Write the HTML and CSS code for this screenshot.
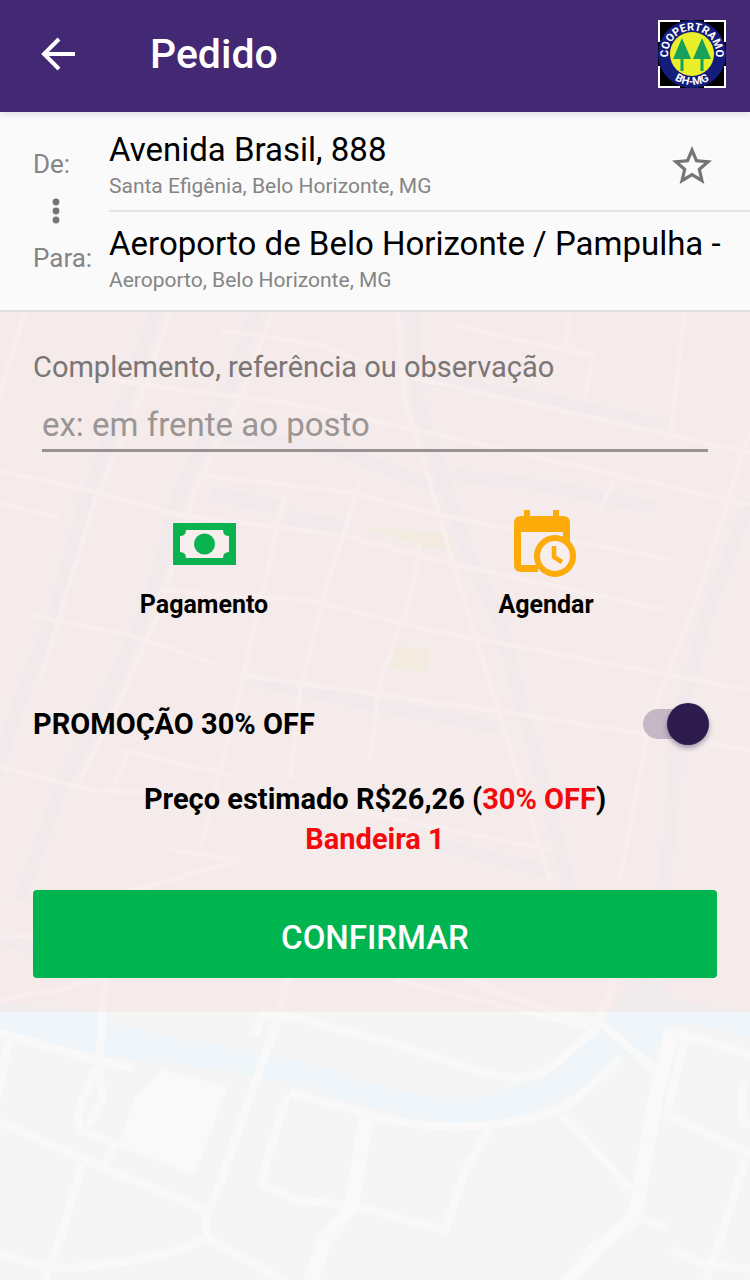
FILE: index.html
```html
<!DOCTYPE html>
<html lang="pt-BR">
<head>
  <meta charset="UTF-8" />
  <meta name="viewport" content="width=device-width, initial-scale=1" />
  <title>Pedido</title>
  <link rel="stylesheet" href="styles.css">
</head>
<body>
<div class="page">

  <!-- mapa de fundo -->
  <svg class="map" viewBox="0 0 750 1280" preserveAspectRatio="xMidYMin slice" aria-hidden="true">
    <g class="map-water">
      <path d="M-10 990 L0 1003 L95 1011 C150 1040 230 1045 300 1060 C360 1075 390 1095 450 1097 C520 1098 570 1065 600 1025 C620 1000 625 985 650 975 L665 985 C670 1010 710 1000 760 1015 L760 1040 C720 1030 690 1020 668 1028 C660 1050 650 1065 620 1055 C590 1090 540 1122 460 1124 C390 1122 350 1095 270 1080 C190 1060 100 1065 -10 1030 Z" />
    </g>
    <g class="map-avenue">
      <path d="M155 312 L125 400 L85 500 L55 610 L20 700 L-10 790" />
      <path d="M255 312 L225 400 L180 490 L150 600 L110 690 L60 790 L20 900" />
      <path d="M412 312 L418 400 L450 500 L470 560 L500 620 L520 700 L545 790 L570 890" />
      <path d="M415 378 L540 398 L660 425" />
      <path d="M215 435 L330 448 L440 488" />
      <path d="M455 475 L540 485 L655 508" />
      <path d="M750 500 L705 620 L680 720 L665 880 L640 990" />
      <path d="M250 680 L360 702 L500 728" />
      <path d="M-10 935 L35 950" />
      <path d="M440 845 L550 872" />
    </g>
    <g class="map-block">
      <path d="M212 486 L280 500 L275 514 L210 500 Z" />
      <path d="M290 510 L345 520 L340 535 L288 524 Z" />
    </g>
    <g class="map-park">
      <path d="M362 528 L415 530 L450 535 L455 552 L420 545 Z" />
      <path d="M395 646 L430 648 L428 672 L390 668 Z" />
    </g>
    <g class="map-street">
      <path d="M25 312 L-5 410" />
      <path d="M170 312 L140 400 L95 500 L40 680" />
      <path d="M272 312 L240 400 L195 490 L160 610 L120 700 L80 780" />
      <path d="M397 312 L405 400 L435 500 L455 570 L495 700 L550 880" />
      <path d="M685 312 L670 440" />
      <path d="M-5 470 L80 488 L180 515 L340 535 L480 570 L665 610" />
      <path d="M-5 503 L60 518" />
      <path d="M110 380 L300 405 L440 435 L750 505" />
      <path d="M220 330 L320 345 L400 375 L560 410 L760 455" />
      <path d="M455 325 L585 355" />
      <path d="M200 475 L345 492 L440 515 L670 560" />
      <path d="M360 480 L345 530 L325 590 L300 690 L290 780" />
      <path d="M285 495 L270 560 L240 690 L200 850" />
      <path d="M420 545 L410 600 L380 680 L370 760" />
      <path d="M160 590 L310 600 L430 630 L750 690" />
      <path d="M30 615 L130 635 L220 665" />
      <path d="M240 675 L490 710 L750 750" />
      <path d="M-5 765 L90 790 L300 800 L550 850" />
      <path d="M130 750 L110 790 M120 750 L230 775" />
      <path d="M620 470 L600 510 M750 430 L700 590 L650 720 L620 880" />
      <path d="M170 850 L240 860 L170 880 L130 890" />
      <path d="M570 312 L565 345 L592 355 L585 400" />
      <path d="M-5 938 L40 935 M-5 1000 L60 990 L110 975" />
      <path d="M395 980 L480 1000 L600 1030" />
    </g>
    <!-- ruas abaixo do painel -->
    <g class="map-road">
      <path d="M288 975 L278 1020 L245 1110 L218 1190 L206 1215 L208 1240" />
      <path d="M208 1238 L300 1290" />
      <path d="M255 1035 L262 1014 L290 1016 L380 1040 L470 1068 Q530 1090 560 1060 L595 1030 L615 978" />
      <path d="M465 980 L530 1003 L602 1024 L655 1070" />
      <path d="M-5 1031 L95 1060 L133 1068" />
      <path d="M105 978 L99 1062 L102 1100 L88 1125" />
      <path d="M96 1070 Q70 1120 82 1130 L115 1144 L105 1165" />
      <path d="M-5 1120 L90 1162 L206 1210" />
      <path d="M10 1035 L-3 1100" />
      <path d="M82 1164 L60 1240 L40 1290" />
      <path d="M-5 1250 Q50 1275 95 1265 Q170 1258 205 1238" />
      <path d="M290 1093 L375 1116 Q460 1140 560 1110 Q590 1090 620 1058" />
      <path d="M287 1095 L270 1150 L262 1185 L297 1200 L350 1205 L445 1230 L465 1170 L478 1150 L490 1128" />
      <path d="M562 1115 L605 1160 L630 1190" />
      <path d="M667 1030 L760 1057 M685 1035 L667 1115 L760 1158" />
      <path d="M745 1080 Q735 1115 750 1126" />
      <path d="M745 1160 L720 1240 L703 1290 M672 1250 L705 1265 L760 1270" />
      <path d="M635 1217 L668 1227" />
    </g>
    <g class="map-road-wide">
      <path d="M366 1118 L352 1205 L325 1240 L308 1290" />
      <path d="M672 1030 L655 1100 L635 1217 L595 1250 L565 1285" />
    </g>
    <path class="map-lot" d="M162 1070 L228 1086 L195 1175 L118 1146 L135 1098 Z" />
  </svg>

  <header class="header">
    <button class="icon-btn" type="button" aria-label="Voltar">
      <svg width="34" height="34" viewBox="0 0 34 34">
        <path d="M34 17 H3 M18 2 L3 17 L18 32" fill="none" stroke="#fff" stroke-width="4" />
      </svg>
    </button>
    <h1>Pedido</h1>
    <svg class="logo" viewBox="0 0 68 68" role="img" aria-label="Coopertramo BH-MG">
      <rect width="68" height="68" fill="#fff" />
      <rect x="2" y="2" width="64" height="64" fill="#000" />
      <path d="M22 0 H46 V2 H66 V22 H68 V46 H66 V66 H46 V68 H22 V66 H2 V46 H0 V22 H2 V2 H22 Z" fill="#000" />
      <circle cx="34" cy="34" r="34" fill="#151d7c" />
      <circle cx="34" cy="34" r="22" fill="#e9f02a" />
      <path d="M24 18 L33 39 H15 Z M44 18 L53 39 H35 Z" fill="#17a05c" />
      <path d="M24 39 V51 M44 39 V51" stroke="#17a05c" stroke-width="3" />
      <path id="arc-top" d="M12 44 A24 24 0 1 1 56 44" fill="none" />
      <path id="arc-bottom" d="M14 58 A32 32 0 0 0 54 58" fill="none" />
      <text class="logo-text"><textPath href="#arc-top" startOffset="50%">COOPERTRAMO</textPath></text>
      <text class="logo-text"><textPath href="#arc-bottom" startOffset="50%">BH-MG</textPath></text>
    </svg>
  </header>

  <section class="route">
    <div class="route-side">
      <span>De:</span>
      <svg class="dots" width="8" height="28" viewBox="0 0 8 28">
        <circle cx="4" cy="5" r="3.4" />
        <circle cx="4" cy="14" r="3.4" />
        <circle cx="4" cy="23" r="3.4" />
      </svg>
      <span>Para:</span>
    </div>
    <div class="route-list">
      <div class="address">
        <div class="address-text">
          <h2>Avenida Brasil, 888</h2>
          <p>Santa Efigênia, Belo Horizonte, MG</p>
        </div>
        <button class="icon-btn" type="button" aria-label="Favoritar">
          <svg width="40" height="40" viewBox="2 2 20 20">
            <path fill="#757575" d="M22 9.24l-7.19-.62L12 2 9.19 8.63 2 9.24l5.46 4.73L5.82 21 12 17.27 18.18 21l-1.63-7.03L22 9.24zM12 15.4l-3.76 2.27 1-4.28-3.32-2.88 4.38-.38L12 6.1l1.71 4.04 4.38.38-3.32 2.88 1 4.28L12 15.4z" />
          </svg>
        </button>
      </div>
      <div class="address">
        <div class="address-text">
          <h2>Aeroporto de Belo Horizonte / Pampulha -</h2>
          <p>Aeroporto, Belo Horizonte, MG</p>
        </div>
      </div>
    </div>
  </section>

  <form class="panel" onsubmit="event.preventDefault();">
    <label class="note-label" for="note">Complemento, referência ou observação</label>
    <input class="note-input" type="text" id="note" placeholder="ex: em frente ao posto" />

    <div class="options">
      <button class="option" type="button">
        <svg width="68" height="72" viewBox="0 0 68 72">
          <rect x="3" y="15" width="63" height="42" fill="#0bb350" />
          <path d="M16 22 H53 Q53 28 59 28 V44 Q53 44 53 50 H16 Q16 44 10 44 V28 Q16 28 16 22 Z" fill="#f7eeed" />
          <circle cx="34.5" cy="36" r="10.5" fill="#0bb350" />
        </svg>
        Pagamento
      </button>
      <button class="option" type="button">
        <svg width="68" height="72" viewBox="0 0 68 72">
          <path d="M12 2 H18 V8 H41 V2 H47 V8 H51 Q58 8 58 15 V56 H51 V24 H9 V57 H26 V64 H9 Q2 64 2 57 V15 Q2 8 9 8 H12 Z" fill="#fcab08" />
          <circle cx="43" cy="48" r="18" fill="#f7eeed" stroke="#fcab08" stroke-width="6" />
          <path d="M42 38 V49 L50 54" fill="none" stroke="#fcab08" stroke-width="4.5" />
        </svg>
        Agendar
      </button>
    </div>

    <div class="promo">
      <label for="promo">PROMOÇÃO 30% OFF</label>
      <input class="switch" type="checkbox" id="promo" checked />
    </div>

    <p class="price">Preço estimado R$26,26 (<span class="red">30% OFF</span>)</p>
    <p class="price red">Bandeira 1</p>

    <button class="confirm" type="submit">CONFIRMAR</button>
  </form>
</div>
</body>
</html>
```
FILE: styles.css
```css
* { box-sizing: border-box; margin: 0; padding: 0; }
body {
  font-family: Roboto, sans-serif;
  background: #f5f5f5;
  color: #000;
}
button, input {
  font-family: inherit;
}
.page {
  position: relative;
  min-height: 100vh;
  overflow: hidden;
}

/* mapa */
.map {
  position: absolute;
  top: 0;
  left: 0;
  width: 100%;
  height: 100%;
}
.map path {
  fill: none;
}
.map .map-water path {
  fill: #eff5f8;
}
.map .map-block path {
  fill: #f0f3f8;
}
.map .map-park path {
  fill: #f4f5e6;
}
.map .map-lot {
  fill: #f9f9f9;
}
.map-avenue {
  stroke: #f0f3f8;
  stroke-width: 12;
}
.map-street {
  stroke: #f9f9f9;
  stroke-width: 5;
}
.map-road {
  stroke: #f9f9f9;
  stroke-width: 8;
}
.map-road-wide {
  stroke: #f9f9f9;
  stroke-width: 15;
}

.header {
  position: relative;
  z-index: 1;
  display: flex;
  align-items: center;
  height: 112px;
  padding: 0 24px 4px 41px;
  background: #432874;
  box-shadow: 0 2px 8px rgba(67, 40, 116, 0.15);
}
.header h1 {
  flex: 1;
  margin-left: 75px;
  font-size: 41px;
  font-weight: 500;
  color: #fff;
}
.icon-btn {
  display: flex;
  border: none;
  background: none;
  cursor: pointer;
}
.logo {
  width: 68px;
  height: 68px;
}
.logo-text {
  font-size: 11px;
  font-weight: bold;
  fill: #fff;
  text-anchor: middle;
}

/* origem e destino */
.route {
  position: relative;
  display: flex;
  background: #fafafa;
  border-bottom: 2px solid #e2dfdf;
}
.route-side {
  display: flex;
  flex-direction: column;
  width: 109px;
  padding: 34px 0 0 33px;
  font-size: 26px;
  line-height: 36px;
  color: #858585;
}
.dots {
  margin: 15px 19px;
  fill: #757575;
}
.route-list {
  flex: 1;
  min-width: 0;
}
.address {
  display: flex;
  align-items: center;
  justify-content: space-between;
  padding: 12px 24px 14px 0;
}
.address:first-child {
  padding: 18px 38px 8px 0;
  border-bottom: 2px solid #e4e4e4;
}
.address-text {
  min-width: 0;
}
.address h2 {
  font-size: 33px;
  font-weight: 400;
  line-height: 40px;
  white-space: nowrap;
}
.address p {
  font-size: 21px;
  line-height: 32px;
  color: #858585;
}

/* painel do pedido */
.panel {
  position: relative;
  display: flex;
  flex-direction: column;
  padding: 35px 33px 34px;
  background: rgba(244, 215, 212, 0.33);
}
.note-label {
  font-size: 29px;
  line-height: 40px;
  color: #7a7676;
}
.note-input {
  height: 64px;
  margin: 1px 9px 0;
  padding-top: 16px;
  padding-bottom: 4px;
  border: none;
  border-bottom: 3px solid #989292;
  outline: none;
  background: none;
  font-size: 33px;
  color: #000;
}
.note-input::placeholder {
  color: #9b9595;
}
.options {
  display: flex;
  margin-top: 56px;
}
.option {
  flex: 1;
  display: flex;
  flex-direction: column;
  align-items: center;
  gap: 9px;
  border: none;
  background: none;
  font-size: 25px;
  font-weight: bold;
  line-height: 32px;
  color: #000;
  cursor: pointer;
}
.promo {
  display: flex;
  align-items: center;
  justify-content: space-between;
  margin: 80px 8px 32px 0;
  font-size: 29px;
  font-weight: bold;
}
.switch {
  position: relative;
  appearance: none;
  width: 66px;
  height: 46px;
  cursor: pointer;
}
.switch::before {
  content: '';
  position: absolute;
  top: 8px;
  left: 0;
  width: 58px;
  height: 30px;
  border-radius: 15px;
  background: #c4b7c6;
}
.switch::after {
  content: '';
  position: absolute;
  top: 2px;
  left: 0;
  width: 42px;
  height: 42px;
  border-radius: 50%;
  background: #8d8494;
  box-shadow: 0 3px 5px rgba(45, 27, 78, 0.4);
}
.switch:checked::after {
  left: 24px;
  background: #2d1b4e;
}
.price {
  font-size: 29px;
  font-weight: bold;
  line-height: 40px;
  text-align: center;
}
.red {
  color: #f20a0e;
}
.confirm {
  height: 88px;
  margin-top: 31px;
  padding-top: 6px;
  border: none;
  border-radius: 4px;
  background: #00b450;
  font-size: 33px;
  font-weight: 500;
  color: #fff;
  cursor: pointer;
}
```
